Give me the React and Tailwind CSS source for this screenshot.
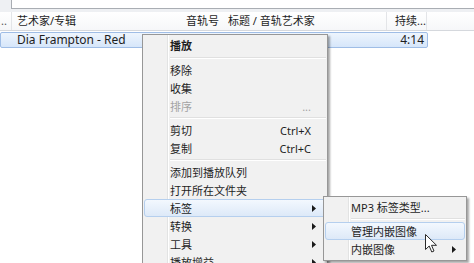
import React from "react";

const FONT = { fontFamily: '"Noto Sans", "Noto Sans CJK SC", sans-serif' };

const Arrow = () => (
  <svg width="4" height="7" viewBox="0 0 4 7" className="relative">
    <polygon points="0,0 4,3.5 0,7" fill="#1a1a1a" />
  </svg>
);

const Separator = ({ h = "h-[6px]", left = "ml-[27px]" }) => (
  <div className={`flex ${h} items-center`}>
    <div className={`${left} mr-[1px] flex-1 border-t border-b border-t-[#e0e0e0] border-b-white`} />
  </div>
);

const MenuItem = ({ label, shortcut, arrow, disabled, active, bold, pl = "pl-[27px]", pr = "pr-[16px]" }) => (
  <div className={`relative flex h-[18px] items-center whitespace-nowrap ${pl} ${pr}`}>
    {active && (
      <div className="absolute inset-y-0 left-[1px] right-[1px] rounded-[3px] border border-[#b5cfee] bg-gradient-to-b from-[#f3f8fe] to-[#dde9f8]" />
    )}
    <span
      className={`relative flex-1 text-[11px] leading-none ${bold ? "font-bold" : ""} ${disabled ? "text-[#a3a3a3]" : "text-[#1e1e1e]"}`}
    >
      {label}
    </span>
    {shortcut && (
      <span className={`relative text-[11px] leading-none ${disabled ? "text-[#a3a3a3]" : "text-[#1e1e1e]"}`}>{shortcut}</span>
    )}
    {arrow && <Arrow />}
  </div>
);

const Cursor = () => (
  <svg width="13" height="20" viewBox="0 0 13 20" className="absolute left-[425px] top-[234px]">
    <path d="M0.5 0.5 L0.5 15.5 L4.2 12 L6.8 18 L9 17 L6.5 11.3 L11.5 11.3 Z" fill="#ffffff" stroke="#2a2a2a" strokeWidth="1" strokeLinejoin="round" />
  </svg>
);

const App = () => {
  return (
    <div className="relative h-[263px] w-[474px] overflow-hidden bg-white" style={FONT}>
      {/* top strip */}
      <div className="flex h-[12px] bg-[#eef0f3]">
        <div className="w-[11px]" />
        <div className="h-[9px] flex-1 border-b border-l border-[#a9adb3] bg-white" />
      </div>

      {/* column header */}
      <div className="flex h-[19px] items-center whitespace-nowrap border-b border-[#d5d8dd] bg-gradient-to-b from-white to-[#f6f7f9] text-[11px] text-[#1e1e1e]">
        <div className="flex h-full w-[12px] items-center overflow-hidden border-r border-[#e3e5e8] pl-[1px] text-[#555]">..</div>
        <div className="flex h-full w-[163px] items-center pl-[5px]">艺术家/专辑</div>
        <div className="flex h-full w-[47px] items-center justify-end pr-[3px]">音轨号</div>
        <div className="flex h-full w-[165px] items-center border-r border-[#e3e5e8] pl-[6px]">标题 / 音轨艺术家</div>
        <div className="flex h-full w-[40px] items-center overflow-hidden border-r border-[#e3e5e8] pl-[8px]">持续...</div>
        <div className="flex-1" />
      </div>

      {/* selected row */}
      <div className="mt-[1px] flex h-[16px] w-[428px] items-center justify-between rounded-[2px] border border-[#9fbde6] bg-gradient-to-b from-[#eef5fd] to-[#d6e6fa] pl-[16px] pr-[3px] text-[12px] text-[#1e1e1e]">
        <span>Dia Frampton - Red</span>
        <span>4:14</span>
      </div>

      {/* context menu */}
      <div className="absolute left-[142px] top-[34px] w-[186px] border border-[#979797] bg-[#f1f1f1] pb-[2px] pt-[1px] shadow-[2px_2px_2px_rgba(0,0,0,0.35)]">
        <div className="absolute bottom-0 left-[24px] top-0 w-[2px] border-l border-r border-l-[#e2e3e3] border-r-white" />
        <MenuItem label="播放" bold />
        <Separator h="h-[7px]" />
        <MenuItem label="移除" />
        <MenuItem label="收集" />
        <MenuItem label="排序" shortcut="..." disabled />
        <Separator />
        <MenuItem label="剪切" shortcut="Ctrl+X" />
        <MenuItem label="复制" shortcut="Ctrl+C" />
        <Separator />
        <MenuItem label="添加到播放队列" />
        <MenuItem label="打开所在文件夹" />
        <MenuItem label="标签" arrow active pr="pr-[11px]" />
        <MenuItem label="转换" arrow pr="pr-[11px]" />
        <MenuItem label="工具" arrow pr="pr-[11px]" />
        <MenuItem label="播放增益" arrow pr="pr-[11px]" />
      </div>

      {/* submenu */}
      <div className="absolute left-[323px] top-[196px] w-[144px] border border-[#979797] bg-[#f1f1f1] pb-[2px] pt-[1px] shadow-[2px_2px_2px_rgba(0,0,0,0.35)]">
        <div className="absolute bottom-0 left-[24px] top-0 w-[2px] border-l border-r border-l-[#e2e3e3] border-r-white" />
        <MenuItem label="MP3 标签类型..." />
        <Separator />
        <MenuItem label="管理内嵌图像" active />
        <MenuItem label="内嵌图像" arrow pr="pr-[10px]" />
      </div>

      <Cursor />
    </div>
  );
};

export default App;
